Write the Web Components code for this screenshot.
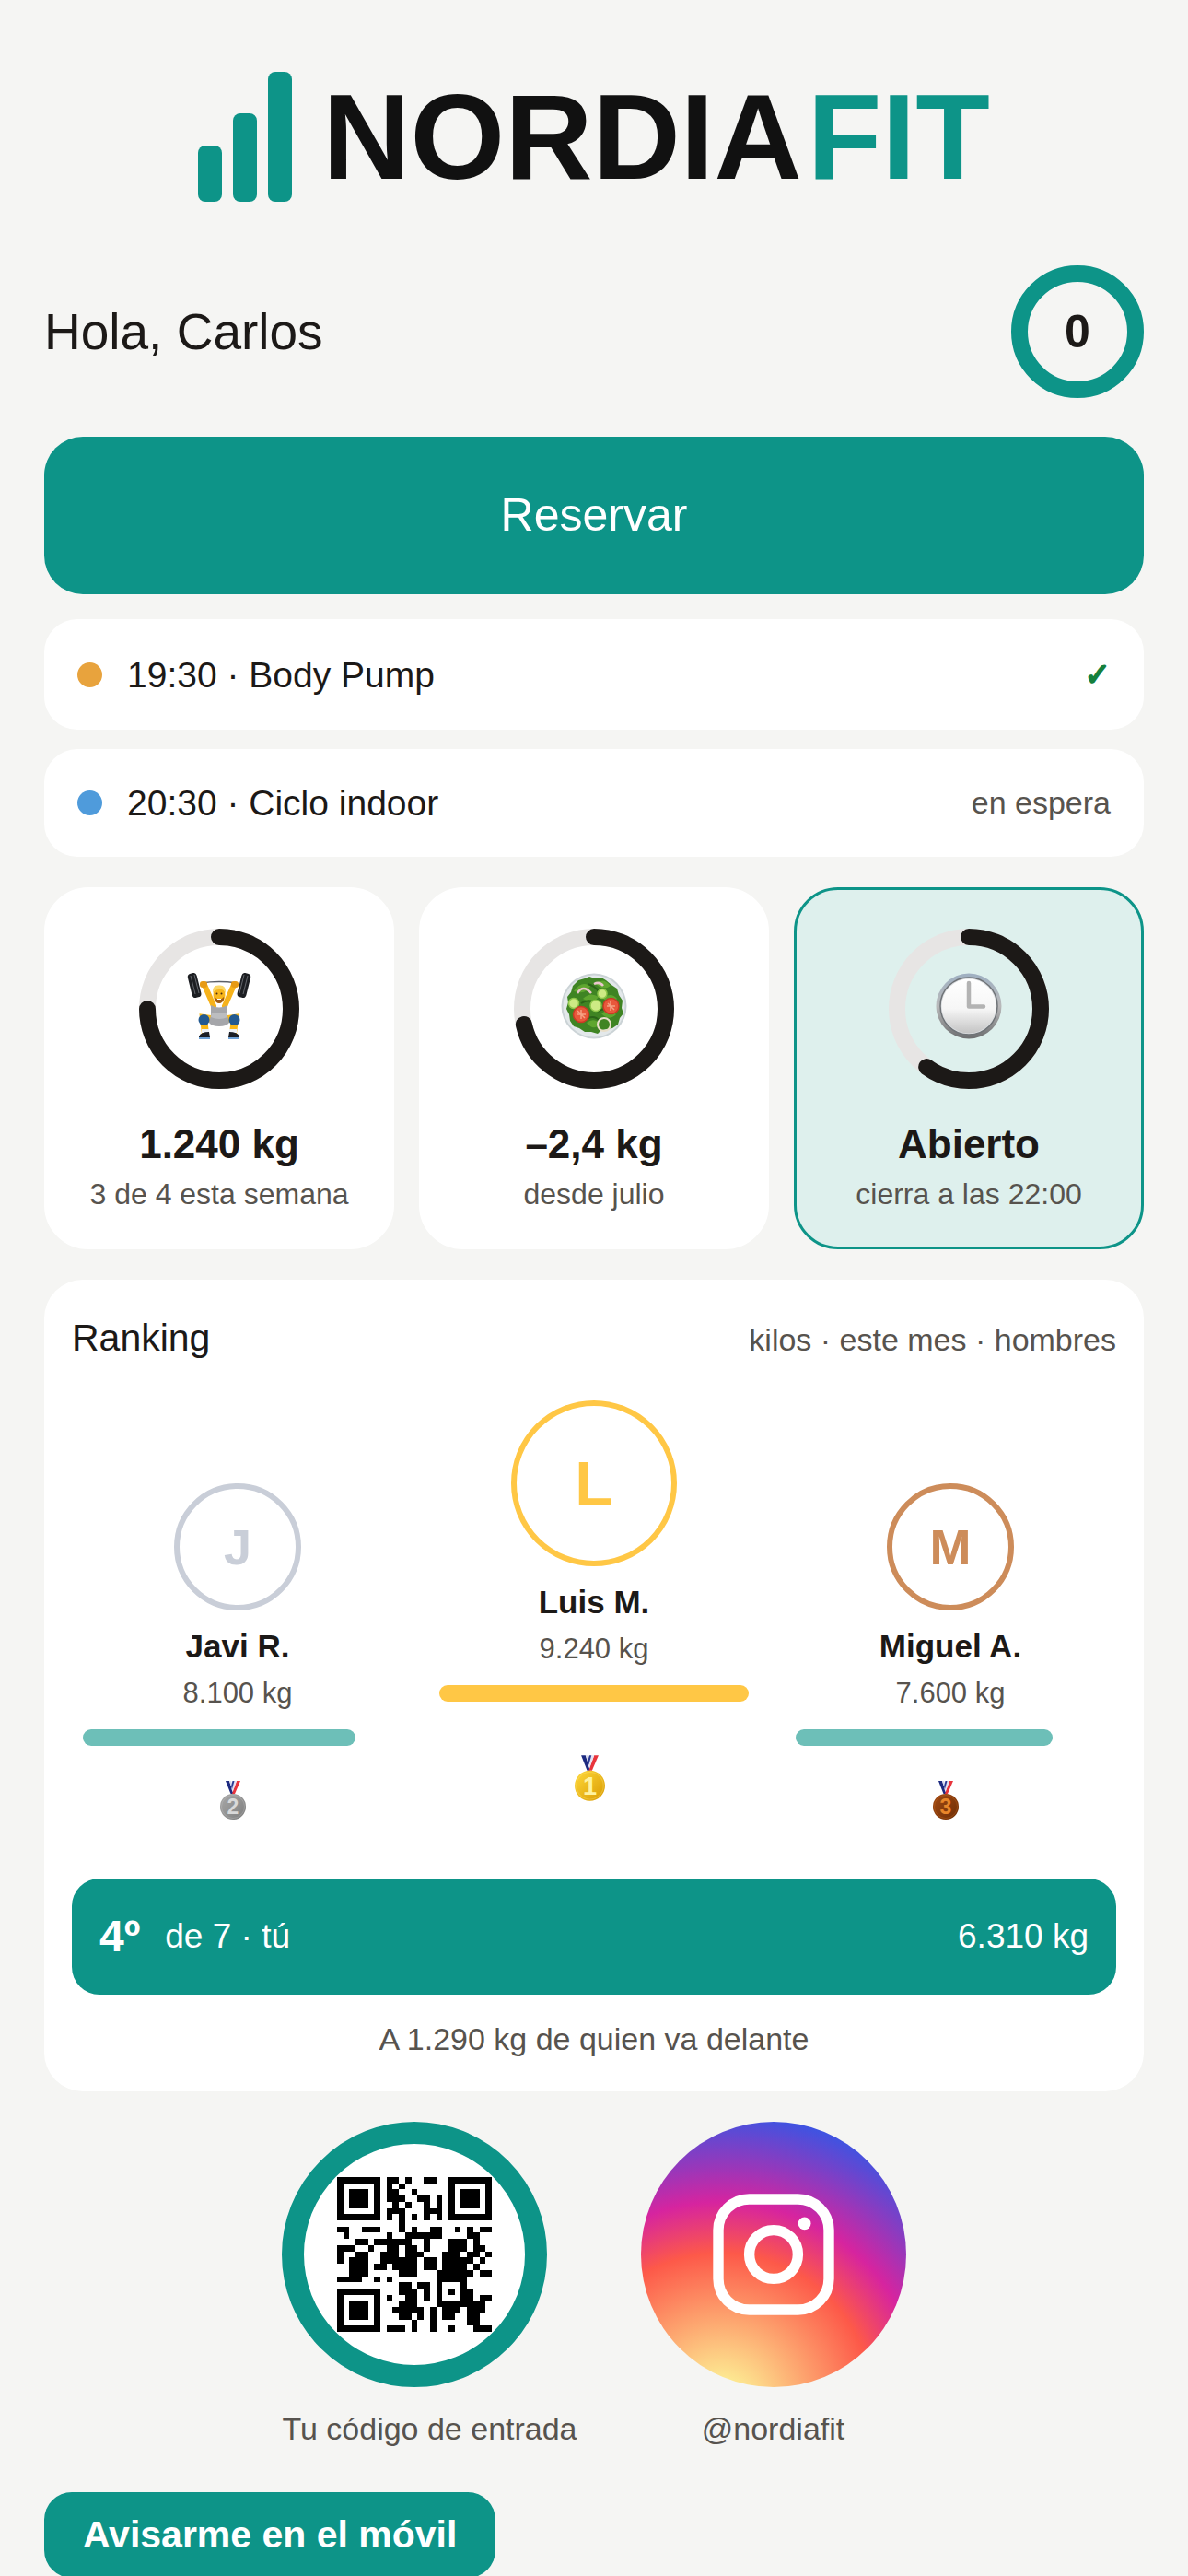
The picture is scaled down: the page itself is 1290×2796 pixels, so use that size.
<!DOCTYPE html>
<html lang="es">
<head>
<meta charset="utf-8">
<meta name="viewport" content="width=device-width, initial-scale=1">
<title>NordiaFit</title>
<style>
  :root {
    --teal: #0d9488;
    --ink: #1c1917;
    --muted: #57534e;
    --page: #f5f5f3;
  }

  body {
    margin: 0;
    background: var(--page);
    color: var(--ink);
    font-family: "Liberation Sans", Arial, sans-serif;
  }
</style>
</head>
<body>
<nordia-app>
  <nordia-logo></nordia-logo>
  <user-greeting points="0">Hola, Carlos</user-greeting>
  <book-button>Reservar</book-button>
  <class-list>
    <class-row color="#e8a33d">19:30 · Body Pump<span slot="state" class="ok">✓</span></class-row>
    <class-row color="#4f9bdb">20:30 · Ciclo indoor<span slot="state">en espera</span></class-row>
  </class-list>
  <stat-grid>
    <stat-card progress="0.75">
      <svg slot="icon" viewBox="0 0 72 72" aria-hidden="true">
        <path d="M16 11Q36 8 56 11" fill="none" stroke="#5b5f66" stroke-width="1.4"/>
        <path d="M20 13L30 36M52 13L42 36" stroke="#f6b21b" stroke-width="6" stroke-linecap="round"/>
        <path d="M34 51L19 49L21 66M38 51L53 49L51 66" fill="none" stroke="#fbb917" stroke-width="8"/>
        <path d="M27 35Q36 40 45 35L45 46L47 54Q44 58 36 58Q28 58 25 54L27 46Z" fill="#a5a6aa"/>
        <path d="M28 43h16l1 5q-9 4-18 0z" fill="#bcbdc0"/>
        <circle cx="19.500" cy="51" r="6" fill="#235a91"/>
        <circle cx="52.500" cy="51" r="6" fill="#235a91"/>
        <path d="M17 61h8v4h-8zM47 61h8v4h-8z" fill="#eef2f8"/>
        <path d="M14 69Q16 64 25 64L26 70H14ZM58 69Q56 64 47 64L46 70H58Z" fill="#1b1e25"/>
        <path d="M14 71h12M46 71h12" stroke="#3f83c9" stroke-width="1.500"/>
        <ellipse cx="36" cy="24" rx="6.500" ry="9" fill="#f8b61c"/>
        <path d="M29 22Q28 13 36 13.500Q44 13 43 22Q40 17 36 18Q31 18 29 22Z" fill="#fbd767"/>
        <path d="M31 26Q36 32 41 26V29Q39 33 36 33Q33 33 31 29Z" fill="#a05c17"/>
        <circle cx="33.500" cy="22.500" r="1" fill="#4b2a10"/>
        <circle cx="38.500" cy="22.500" r="1" fill="#4b2a10"/>
        <path d="M34 28.500h4" stroke="#fff" stroke-width="1"/>
        <g fill="#1c1e22">
          <rect x="4" y="0" width="10" height="27" rx="4" transform="rotate(-14 9 13)"/>
          <rect x="58" y="0" width="10" height="27" rx="4" transform="rotate(14 63 13)"/>
        </g>
        <path d="M5 3l5 20M9 2l5 20M67 3l-5 20M63 2l-5 20" stroke="#65686e" stroke-width="1"/>
        <rect x="15" y="9" width="8" height="7" rx="3" fill="#e79a14"/>
        <rect x="49" y="9" width="8" height="7" rx="3" fill="#e79a14"/>
      </svg>
      1.240 kg
      <span slot="note">3 de 4 esta semana</span>
    </stat-card>
    <stat-card progress="0.715">
      <svg slot="icon" viewBox="0 0 72 72" aria-hidden="true">
        <circle cx="36" cy="36" r="35.500" fill="#cbd3d6"/>
        <circle cx="36" cy="36" r="33.500" fill="#e3e8ea"/>
        <path d="M13 14L19 8L26 6L31 4L37 6L44 5L49 8L55 13L61 17L63 24L67 30L66 38L68 44L64 49L62 56L56 60L50 61L44 62L40 66L33 64L26 64L20 60L14 58L10 52L9 45L6 39L8 32L7 26L11 21Z" fill="#3f8423"/>
        <path d="M14 20q8-12 18-6q-4 10-18 6zM38 12q8-8 16 2q-8 6-16-2zM24 28q8-8 17-2q-6 9-17 2zM46 28q8-8 15 0q-6 8-15 0zM14 46q8-4 12 5q-8 5-12-5zM28 54q8-6 14 1q-6 9-14-1zM44 44q9-7 16 1q-8 8-16-1z" fill="#5fa62f"/>
        <path d="M22 33q9-6 16 1M40 42q8-6 15 2M29 12q8 2 12 8M30 49q7-3 12 3" fill="none" stroke="#2b6418" stroke-width="2"/>
        <path d="M18 22Q24 12 33 22M36 12Q42 9 46 14" fill="none" stroke="#ecc6cd" stroke-width="2.500"/>
        <g fill="#cdea84" stroke="#8fc74a" stroke-width="1.500">
          <circle cx="14" cy="33" r="5.500"/>
          <circle cx="45" cy="22.500" r="5"/>
          <circle cx="38" cy="35.500" r="6"/>
        </g>
        <g fill="#e8583b" stroke="#c93a25" stroke-width="1.500">
          <circle cx="22" cy="45" r="8.500"/>
          <circle cx="54.500" cy="36" r="8.500"/>
        </g>
        <path d="M17 45h10M22 40v10M18 41l8 8M50 36h9M54 31v10M51 33l7 7" stroke="#f5a184" stroke-width="1.500"/>
        <circle cx="47" cy="56" r="7" fill="none" stroke="#e9dfc9" stroke-width="2"/>
      </svg>
      –2,4 kg
      <span slot="note">desde julio</span>
    </stat-card>
    <stat-card progress="0.6" active>
      <svg slot="icon" viewBox="0 0 72 72" aria-hidden="true">
        <defs>
          <linearGradient id="rim" x1="0" y1="0" x2="0" y2="1">
            <stop offset="0" stop-color="#9fb0c2"/>
            <stop offset="0.500" stop-color="#b9b9ba"/>
            <stop offset="1" stop-color="#6d6e70"/>
          </linearGradient>
          <linearGradient id="face" x1="0" y1="0" x2="0" y2="1">
            <stop offset="0" stop-color="#ffffff"/>
            <stop offset="0.550" stop-color="#f6f6f6"/>
            <stop offset="1" stop-color="#c4c4c4"/>
          </linearGradient>
        </defs>
        <circle cx="36" cy="36" r="35.500" fill="url(#rim)"/>
        <circle cx="36" cy="36" r="31" fill="#d9dcdf" stroke="#6f7377" stroke-width="1.500"/>
        <circle cx="36" cy="36" r="29.500" fill="url(#face)"/>
        <path d="M36 11V36.500H52" fill="none" stroke="#b3b3b3" stroke-width="4.500" stroke-linecap="round" stroke-linejoin="round"/>
      </svg>
      Abierto
      <span slot="note">cierra a las 22:00</span>
    </stat-card>
  </stat-grid>
  <ranking-card>
    <span slot="title">Ranking</span>
    <span slot="filter">kilos · este mes · hombres</span>
    <podium-place place="2" name="Javi R." kilos="8.100 kg" share="88"></podium-place>
    <podium-place place="1" name="Luis M." kilos="9.240 kg" share="100"></podium-place>
    <podium-place place="3" name="Miguel A." kilos="7.600 kg" share="83"></podium-place>
    <b slot="rank">4º</b>
    <span slot="of">de 7 · tú</span>
    <span slot="mine">6.310 kg</span>
    <span slot="caption">A 1.290 kg de quien va delante</span>
  </ranking-card>
  <quick-links></quick-links>
  <notify-button>Avisarme en el móvil</notify-button>
</nordia-app>

<script>
const render = (el, html) => {
  const template = document.createElement('template')
  template.innerHTML = html
  el.attachShadow({ mode: 'open' }).appendChild(template.content.cloneNode(true))
}

class NordiaApp extends HTMLElement {
  constructor () {
    super()
    render(this, `
      <style>
        :host {
          display: block;
          height: 100vh;
          overflow-y: auto;
          scrollbar-width: none;
        }
        main {
          display: flex;
          flex-direction: column;
          padding: 78px 48px 60px;
        }
      </style>
      <main><slot></slot></main>`)
  }
}

class NordiaLogo extends HTMLElement {
  constructor () {
    super()
    render(this, `
      <style>
        :host {
          display: flex;
          justify-content: center;
          align-items: center;
          gap: 33px;
          height: 141px;
          color: #111;
          font-size: 132px;
          font-weight: bold;
          line-height: 1;
        }
        .bars {
          display: flex;
          align-items: flex-end;
          gap: 12px;
        }
        .bars i {
          width: 26px;
          border-radius: 8px;
          background: var(--teal);
        }
        .bars i:nth-child(1) { height: 61px; }
        .bars i:nth-child(2) { height: 96px; }
        .bars i:nth-child(3) { height: 141px; }
        em {
          margin-left: 6px;
          color: var(--teal);
          font-style: normal;
        }
      </style>
      <div class="bars"><i></i><i></i><i></i></div>
      <div>NORDIA<em>FIT</em></div>`)
  }
}

class UserGreeting extends HTMLElement {
  constructor () {
    super()
    render(this, `
      <style>
        :host {
          display: flex;
          justify-content: space-between;
          align-items: center;
          margin-top: 69px;
        }
        h1 {
          margin: 0;
          font-size: 55px;
          font-weight: normal;
          line-height: 60px;
        }
        .points {
          box-sizing: border-box;
          display: grid;
          place-items: center;
          width: 144px;
          height: 144px;
          border: 18px solid var(--teal);
          border-radius: 50%;
          font-size: 50px;
          font-weight: bold;
          line-height: 54px;
        }
      </style>
      <h1><slot></slot></h1>
      <div class="points">${this.getAttribute('points')}</div>`)
  }
}

class BookButton extends HTMLElement {
  constructor () {
    super()
    render(this, `
      <style>
        :host {
          display: block;
          margin-top: 42px;
        }
        button {
          display: block;
          width: 100%;
          padding: 54px;
          border: 0;
          border-radius: 42px;
          background: var(--teal);
          color: #fff;
          font: inherit;
          font-size: 50px;
          line-height: 63px;
        }
      </style>
      <button type="button"><slot></slot></button>`)
  }
}

class ClassList extends HTMLElement {
  constructor () {
    super()
    render(this, `
      <style>
        :host {
          display: flex;
          flex-direction: column;
          gap: 21px;
          margin-top: 27px;
        }
      </style>
      <slot></slot>`)
  }
}

class ClassRow extends HTMLElement {
  constructor () {
    super()
    render(this, `
      <style>
        :host {
          display: flex;
          align-items: center;
          gap: 27px;
          padding: 36px;
          border-radius: 36px;
          background: #fff;
          font-size: 39px;
          line-height: 45px;
        }
        .dot {
          width: 27px;
          height: 27px;
          border-radius: 50%;
          background: ${this.getAttribute('color')};
        }
        .name { flex: 1; }
        ::slotted([slot=state]) {
          color: var(--muted);
          font-size: 34px;
        }
        ::slotted(.ok) {
          color: #15803d;
          font-family: "DejaVu Sans", sans-serif;
          line-height: 48px;
          -webkit-text-stroke: 2px;
        }
      </style>
      <span class="dot"></span>
      <span class="name"><slot></slot></span>
      <slot name="state"></slot>`)
  }
}

class StatGrid extends HTMLElement {
  constructor () {
    super()
    render(this, `
      <style>
        :host {
          display: grid;
          grid-template-columns: repeat(3, 1fr);
          gap: 27px;
          margin-top: 33px;
        }
      </style>
      <slot></slot>`)
  }
}

class StatCard extends HTMLElement {
  constructor () {
    super()
    const progress = Number(this.getAttribute('progress')) * 100
    render(this, `
      <style>
        :host {
          display: flex;
          flex-direction: column;
          align-items: center;
          padding: 42px 9px 30px;
          border: 3px solid #fff;
          border-radius: 48px;
          background: #fff;
          text-align: center;
        }
        :host([active]) {
          border-color: var(--teal);
          background: #def0ed;
        }
        .ring {
          display: grid;
          place-items: center;
          width: 174px;
          height: 174px;
        }
        .ring > * { grid-area: 1 / 1; }
        .ring svg {
          width: 174px;
          height: 174px;
        }
        ::slotted(svg) {
          grid-area: 1 / 1;
          width: 72px;
          height: 72px;
          padding-bottom: 6px;
        }
        .value {
          margin-top: 33px;
          font-size: 44px;
          font-weight: bold;
          line-height: 54px;
        }
        .note {
          color: var(--muted);
          font-size: 32px;
          line-height: 54px;
        }
      </style>
      <div class="ring">
        <svg viewBox="0 0 174 174" fill="none" stroke-width="18" aria-hidden="true">
          <circle cx="87" cy="87" r="78" stroke="#e7e5e4"/>
          <circle cx="87" cy="87" r="78" stroke="#1c1917" stroke-linecap="round"
            pathLength="100" stroke-dasharray="${progress} 100" transform="rotate(-90 87 87)"/>
        </svg>
        <slot name="icon"></slot>
      </div>
      <div class="value"><slot></slot></div>
      <div class="note"><slot name="note"></slot></div>`)
  }
}

class RankingCard extends HTMLElement {
  constructor () {
    super()
    render(this, `
      <style>
        :host {
          display: block;
          margin-top: 33px;
          padding: 36px 30px 33px;
          border-radius: 42px;
          background: #fff;
        }
        header {
          display: flex;
          justify-content: space-between;
          align-items: baseline;
          line-height: 54px;
        }
        h2 {
          margin: 0;
          font-size: 41px;
          font-weight: normal;
        }
        .filter, .caption {
          color: var(--muted);
          font-size: 34px;
        }
        .podium {
          display: grid;
          grid-template-columns: repeat(3, 1fr);
          align-items: end;
          gap: 27px;
          margin-top: 39px;
        }
        .me {
          display: flex;
          align-items: center;
          gap: 27px;
          margin-top: 27px;
          padding: 36px 30px;
          border-radius: 30px;
          background: var(--teal);
          color: #fff;
          font-size: 37px;
          line-height: 54px;
        }
        .mine { margin-left: auto; }
        ::slotted(b) { font-size: 48px; }
        .caption {
          margin: 24px 0 0;
          line-height: 48px;
          text-align: center;
        }
      </style>
      <header>
        <h2><slot name="title"></slot></h2>
        <span class="filter"><slot name="filter"></slot></span>
      </header>
      <div class="podium"><slot></slot></div>
      <div class="me">
        <slot name="rank"></slot>
        <slot name="of"></slot>
        <span class="mine"><slot name="mine"></slot></span>
      </div>
      <p class="caption"><slot name="caption"></slot></p>`)
  }
}

const places = {
  1: { color: '#ffc745', bar: '#ffc745', disc: ['#ffd93b', '#d99a00'], digit: '#fff3a0' },
  2: { color: '#c9ced8', bar: '#6dbfb8', disc: ['#a9a9a9', '#7d7d7d'], digit: '#d9d9d9' },
  3: { color: '#cd8c5a', bar: '#6dbfb8', disc: ['#a34a12', '#6d2d06'], digit: '#e8862a' }
}

class PodiumPlace extends HTMLElement {
  constructor () {
    super()
    const place = this.getAttribute('place')
    const name = this.getAttribute('name')
    const look = places[place]
    render(this, `
      <style>
        :host {
          --size: 138px;
          --step: 117px;
          display: flex;
          flex-direction: column;
          align-items: center;
          padding: 0 12px;
        }
        :host([place="1"]) {
          --size: 180px;
          --step: 165px;
        }
        .avatar {
          box-sizing: border-box;
          display: grid;
          place-items: center;
          width: var(--size);
          height: var(--size);
          border: 6px solid;
          border-radius: 50%;
          color: ${look.color};
          font-size: 54px;
          font-weight: bold;
        }
        :host([place="1"]) .avatar { font-size: 68px; }
        .name {
          margin-top: 18px;
          font-size: 35px;
          font-weight: bold;
          line-height: 42px;
        }
        .kilos {
          margin-top: 9px;
          color: var(--muted);
          font-size: 31px;
          line-height: 42px;
        }
        .track {
          align-self: stretch;
          margin-top: 18px;
        }
        .bar {
          width: ${this.getAttribute('share')}%;
          height: 18px;
          border-radius: 9px;
          background: ${look.bar};
        }
        .step {
          display: grid;
          place-items: center;
          height: var(--step);
          padding-right: 10px;
        }
        .step svg {
          width: 28px;
          height: 42px;
        }
        :host([place="1"]) .step svg {
          width: 33px;
          height: 50px;
        }
      </style>
      <div class="avatar">${name[0]}</div>
      <div class="name">${name}</div>
      <div class="kilos">${this.getAttribute('kilos')}</div>
      <div class="track"><div class="bar"></div></div>
      <div class="step">
        <svg viewBox="0 0 28 42">
          <defs>
            <linearGradient id="disc" x1="0" y1="0" x2="1" y2="1">
              <stop offset="0" stop-color="${look.disc[0]}"/>
              <stop offset="1" stop-color="${look.disc[1]}"/>
            </linearGradient>
          </defs>
          <path d="M6 0h4l4.500 14h-3z" fill="#1d2a80"/>
          <path d="M10 0h2l4 11-1.500 3z" fill="#d9dcef"/>
          <path d="M22 0h-4l-5 14h3z" fill="#e8343c"/>
          <path d="M18 0h-2.500l-3 9 1 3z" fill="#e6e2f2"/>
          <path d="M15.500 0h-2l-1.500 6 1 3z" fill="#2b3a94"/>
          <circle cx="14" cy="28" r="14" fill="url(#disc)"/>
          <circle cx="14" cy="28" r="12.500" fill="none" stroke="${look.digit}" stroke-opacity="0.250"/>
          <text x="14" y="36" text-anchor="middle" font-size="23" font-weight="bold" fill="${look.digit}">${place}</text>
        </svg>
      </div>`)
  }
}

const qrRows = [
  '1111111011010011001111111',
  '1000001010100000001000001',
  '1011101011001000001011101',
  '1011101011100110101011101',
  '1011101001010010101011101',
  '1000001011100011101000001',
  '1111111010101010101111111',
  '0000000000100000000000000',
  '1100111000101001100101011',
  '0100000010011111100001100',
  '0001101111110010001110100',
  '1110010011011010001110110',
  '1001100111011100011101101',
  '1011100111111011011111010',
  '0011101101111011011110100',
  '0011100000111000111111011',
  '1111001010000000111110000',
  '0000000000110110100010000',
  '1111111000111010101011000',
  '1000001010011010100011011',
  '1011101000111000111111110',
  '1011101001111101011101110',
  '1011101000110101011001100',
  '1000001000001001000001100',
  '1111111011101001001000111'
]

class QrCode extends HTMLElement {
  constructor () {
    super()
    let path = ''
    qrRows.forEach((row, y) => {
      for (const run of row.matchAll(/1+/g)) {
        path += `M${run.index} ${y}h${run[0].length}v1h-${run[0].length}z`
      }
    })
    render(this, `
      <style>
        :host { display: block; }
        svg { display: block; width: 100%; }
      </style>
      <svg viewBox="0 0 25 25" shape-rendering="crispEdges"><path d="${path}"/></svg>`)
  }
}

class QuickLinks extends HTMLElement {
  constructor () {
    super()
    render(this, `
      <style>
        :host {
          display: flex;
          justify-content: center;
          gap: 69px;
          margin-top: 33px;
          color: var(--muted);
          font-size: 34px;
          line-height: 48px;
        }
        button, a {
          display: flex;
          flex-direction: column;
          gap: 21px;
          padding: 0;
          border: 0;
          background: none;
          color: inherit;
          font: inherit;
          text-align: center;
          text-decoration: none;
        }
        .disc {
          box-sizing: border-box;
          display: grid;
          place-items: center;
          width: 288px;
          height: 288px;
          border-radius: 50%;
        }
        .code {
          border: 24px solid var(--teal);
          background: #fff;
        }
        qr-code { width: 168px; }
        .insta {
          background: radial-gradient(circle at 30% 107%, #fdf497 0%, #fdf497 5%, #fd5949 45%, #d6249f 60%, #285aeb 90%);
        }
        .insta svg { width: 144px; }
      </style>
      <button type="button">
        <span class="disc code"><qr-code></qr-code></span>
        <span>Tu código de entrada</span>
      </button>
      <a href="#nordiafit">
        <span class="disc insta">
          <svg viewBox="0 0 24 24" fill="none" stroke="#fff" stroke-width="1.900" aria-hidden="true">
            <rect x="2" y="2" width="20" height="20" rx="5.600"/>
            <circle cx="12" cy="12" r="4.400"/>
            <circle cx="17.600" cy="6.400" r="1.150" fill="#fff" stroke="none"/>
          </svg>
        </span>
        <span>@nordiafit</span>
      </a>`)
  }
}

class NotifyButton extends HTMLElement {
  constructor () {
    super()
    render(this, `
      <style>
        :host {
          display: block;
          margin-top: 45px;
        }
        button {
          padding: 24px 42px;
          border: 0;
          border-radius: 30px;
          background: var(--teal);
          color: #fff;
          font: inherit;
          font-size: 41px;
          font-weight: bold;
          line-height: 45px;
        }
      </style>
      <button type="button"><slot></slot></button>`)
  }
}

customElements.define('nordia-app', NordiaApp)
customElements.define('nordia-logo', NordiaLogo)
customElements.define('user-greeting', UserGreeting)
customElements.define('book-button', BookButton)
customElements.define('class-list', ClassList)
customElements.define('class-row', ClassRow)
customElements.define('stat-grid', StatGrid)
customElements.define('stat-card', StatCard)
customElements.define('ranking-card', RankingCard)
customElements.define('podium-place', PodiumPlace)
customElements.define('qr-code', QrCode)
customElements.define('quick-links', QuickLinks)
customElements.define('notify-button', NotifyButton)
</script>
</body>
</html>
